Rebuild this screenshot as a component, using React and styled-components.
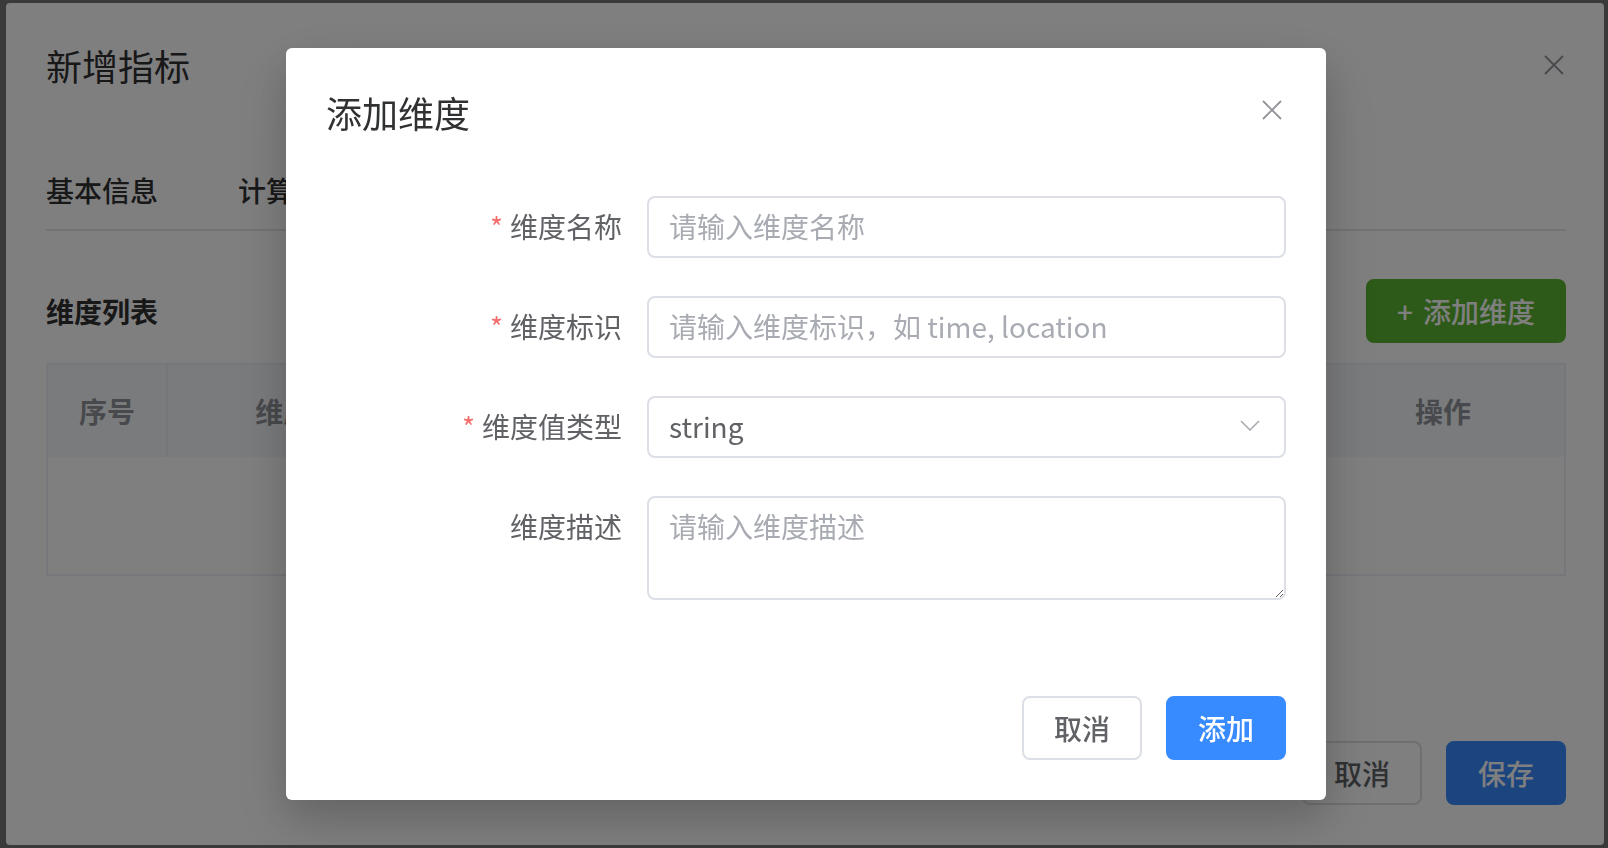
import React from "react";
import styled, { createGlobalStyle, css } from "styled-components";

const GlobalStyle = createGlobalStyle`
  html, body { margin: 0; padding: 0; height: 100%; }
  body {
    background: #757575;
    font-family: "Noto Sans CJK SC", "Noto Sans", sans-serif;
    overflow: hidden;
  }
  #root { height: 100%; }
  *, *::before, *::after { box-sizing: border-box; }
`;

const Page = styled.div`
  height: 100vh;
  padding: 3px 4px 3px 6px;
  display: flex;
`;

const Panel = styled.section`
  flex: 1;
  background: #fff;
  border-radius: 4px;
  padding: 38px 38px 40px 40px;
  display: flex;
  flex-direction: column;
`;

const Header = styled.header`
  height: 48px;
  display: flex;
  align-items: center;
  justify-content: space-between;
`;

const Title = styled.h2`
  margin: 0;
  font-size: 36px;
  line-height: 48px;
  font-weight: 400;
  color: #303133;
`;

const CloseButton = styled.button`
  width: ${(p) => p.$size}px;
  height: ${(p) => p.$size}px;
  margin-bottom: ${(p) => p.$lift || 0}px;
  border: none;
  background: transparent;
  padding: 0;
  display: flex;
  align-items: center;
  justify-content: center;
  color: #909399;
  cursor: pointer;
`;

const Tabs = styled.nav`
  margin-top: 60px;
  display: flex;
  border-bottom: 2px solid #e4e7ed;
`;

const Tab = styled.div`
  position: relative;
  height: 80px;
  line-height: 82px;
  padding: 0 40px;
  font-size: 28px;
  font-weight: 500;
  color: ${(p) => (p.$active ? "#409eff" : "#303133")};
  &:first-child { padding-left: 0; }
  ${(p) =>
    p.$active &&
    css`
      &::after {
        content: "";
        position: absolute;
        left: 40px;
        right: 40px;
        bottom: -2px;
        height: 4px;
        background: #409eff;
      }
    `}
`;

const Toolbar = styled.div`
  margin-top: 48px;
  height: 64px;
  display: flex;
  align-items: center;
  justify-content: space-between;
`;

const SectionTitle = styled.h3`
  margin: 0;
  font-size: 28px;
  font-weight: 600;
  color: #303133;
`;

const Button = styled.button`
  width: ${(p) => p.$width || 120}px;
  height: ${(p) => p.$height || 64}px;
  border-radius: 8px;
  font-family: inherit;
  font-size: 28px;
  font-weight: 500;
  cursor: pointer;
  display: flex;
  align-items: center;
  justify-content: center;
  gap: 10px;
  padding: 0;
  ${(p) =>
    p.$variant === "primary"
      ? css`
          background: #388bff;
          border: 2px solid #388bff;
          color: #fff;
        `
      : p.$variant === "success"
      ? css`
          background: #5ab430;
          border: 2px solid #5ab430;
          color: #fff;
        `
      : css`
          background: #fff;
          border: 2px solid #dcdfe6;
          color: #606266;
        `}
`;

const Table = styled.div`
  margin-top: 20px;
  border: 2px solid #ebeef5;
  display: flex;
  flex-direction: column;
`;

const HeadRow = styled.div`
  display: flex;
  height: 92px;
  background: #f5f7fa;
`;

const HeadCell = styled.div`
  flex: ${(p) => (p.$width ? `0 0 ${p.$width}px` : "1 1 0")};
  display: flex;
  align-items: center;
  justify-content: center;
  font-size: 28px;
  font-weight: 600;
  color: #909399;
  border-right: 2px solid #ebeef5;
  &:last-child { border-right: none; }
`;

const EmptyBody = styled.div`
  height: 117px;
`;

const Footer = styled.footer`
  margin-top: auto;
  display: flex;
  justify-content: flex-end;
  gap: 24px;
`;

const Overlay = styled.div`
  position: fixed;
  inset: 0;
  background: rgba(0, 0, 0, 0.5);
  display: flex;
  justify-content: center;
  align-items: flex-start;
  padding: 48px 0 0 4px;
`;

const Modal = styled.div`
  width: 1040px;
  height: 752px;
  background: #fff;
  border-radius: 6px;
  padding: 40px;
  display: flex;
  flex-direction: column;
  box-shadow: 0 24px 64px 8px rgba(0, 0, 0, 0.08), 0 16px 40px rgba(0, 0, 0, 0.16);
`;

const ModalHeader = styled.div`
  height: 48px;
  display: flex;
  align-items: center;
  justify-content: space-between;
`;

const Form = styled.form`
  margin-top: 60px;
  display: grid;
  grid-template-columns: 321px 639px;
  row-gap: 38px;
`;

const Label = styled.label`
  align-self: start;
  padding-right: 25px;
  text-align: right;
  font-size: 28px;
  line-height: 60px;
  color: #606266;
  ${(p) =>
    p.$required &&
    css`
      &::before {
        content: "*";
        color: #f56c6c;
        margin-right: 7px;
      }
    `}
`;

const fieldBase = css`
  width: 100%;
  border: 2px solid #dcdfe6;
  border-radius: 8px;
  background: #fff;
  font-family: inherit;
  font-size: 28px;
  color: #606266;
  outline: none;
  &::placeholder { color: #a8abb2; }
`;

const TextInput = styled.input`
  ${fieldBase}
  height: 62px;
  padding: 0 20px 3px;
`;

const SelectBox = styled.div`
  ${fieldBase}
  height: 62px;
  padding: 0 24px 3px 20px;
  display: flex;
  align-items: center;
  justify-content: space-between;
`;

const TextArea = styled.textarea`
  ${fieldBase}
  height: 104px;
  padding: 7px 20px;
  line-height: 1.5;
  resize: vertical;
  display: block;
`;

const CloseIcon = ({ size = 20 }) => (
  <svg width={size} height={size} viewBox="0 0 20 20" fill="none">
    <path d="M1 1L19 19M19 1L1 19" stroke="currentColor" strokeWidth="1.8" />
  </svg>
);

const Chevron = () => (
  <svg width="20" height="11" viewBox="0 0 20 11" fill="none">
    <path d="M1 1L10 10L19 1" stroke="#a8abb2" strokeWidth="1.6" />
  </svg>
);

export default function App() {
  return (
    <>
      <GlobalStyle />
      <Page>
        <Panel>
          <Header>
            <Title>新增指标</Title>
            <CloseButton $size={24}>
              <CloseIcon />
            </CloseButton>
          </Header>
          <Tabs>
            <Tab>基本信息</Tab>
            <Tab>计算规则</Tab>
            <Tab $active>维度配置</Tab>
          </Tabs>
          <Toolbar>
            <SectionTitle>维度列表</SectionTitle>
            <Button $variant="success" $width={200} $height={64}>
              <span>+</span>
              <span>添加维度</span>
            </Button>
          </Toolbar>
          <Table>
            <HeadRow>
              <HeadCell $width={120}>序号</HeadCell>
              <HeadCell>维度名称</HeadCell>
              <HeadCell />
              <HeadCell />
              <HeadCell />
              <HeadCell $width={242}>操作</HeadCell>
            </HeadRow>
            <EmptyBody />
          </Table>
          <Footer>
            <Button>取消</Button>
            <Button $variant="primary">保存</Button>
          </Footer>
        </Panel>
      </Page>
      <Overlay>
        <Modal>
          <ModalHeader>
            <Title>添加维度</Title>
            <CloseButton $size={28} $lift={4}>
              <CloseIcon />
            </CloseButton>
          </ModalHeader>
          <Form onSubmit={(e) => e.preventDefault()}>
            <Label $required>维度名称</Label>
            <TextInput placeholder="请输入维度名称" />
            <Label $required>维度标识</Label>
            <TextInput placeholder="请输入维度标识，如 time, location" />
            <Label $required>维度值类型</Label>
            <SelectBox>
              <span>string</span>
              <Chevron />
            </SelectBox>
            <Label>维度描述</Label>
            <TextArea placeholder="请输入维度描述" />
          </Form>
          <Footer>
            <Button>取消</Button>
            <Button $variant="primary">添加</Button>
          </Footer>
        </Modal>
      </Overlay>
    </>
  );
}
